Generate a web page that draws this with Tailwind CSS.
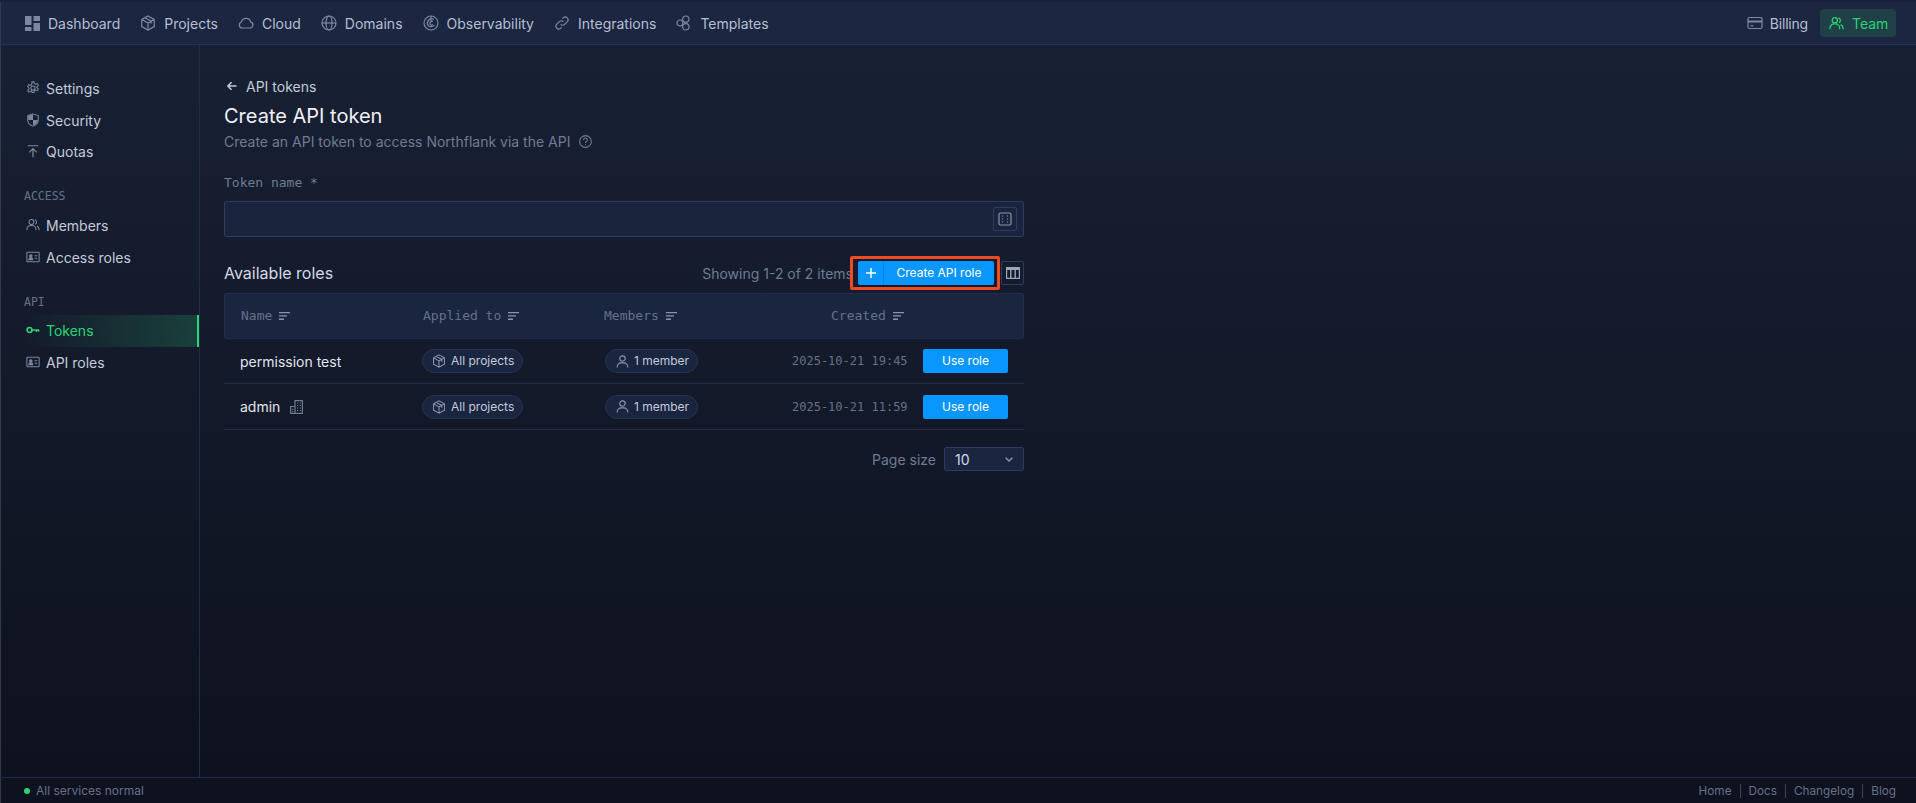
<!DOCTYPE html>
<html lang="en">
<head>
    <meta charset="UTF-8">
    <meta name="viewport" content="width=device-width, initial-scale=1.0">
    <script src="https://cdn.jsdelivr.net/npm/@tailwindcss/browser@4"></script>
    <title>Create API token</title>
</head>
<body class="h-[803px] overflow-hidden bg-[#0e121e] font-['Inter',sans-serif] text-[14px] text-[#c3cbdb]">

    <!-- icon sprite -->
    <svg class="hidden">
        <symbol id="i-dash" viewBox="0 0 15 15"><path fill="currentColor" stroke="none" d="M0 0h6.500v9H0zM8.500 0H15v5H8.500zM8.500 7H15v8H8.500zM0 11h6.500v4H0z"/></symbol>
        <symbol id="i-box" viewBox="0 0 16 16"><path d="M8 1l6.200 3.400v7.200L8 15l-6.200-3.400V4.400zM1.800 4.400L8 8l6.200-3.600M8 8v7M4.900 2.700l6.200 3.500v2.600"/></symbol>
        <symbol id="i-cloud" viewBox="0 0 16 16"><path d="M4.200 13h7.900a3 3 0 0 0 .6-5.900 4.800 4.800 0 0 0-9.300-.1A3.100 3.100 0 0 0 4.200 13z"/></symbol>
        <symbol id="i-globe" viewBox="0 0 16 16"><circle cx="8" cy="8" r="7"/><ellipse cx="8" cy="8" rx="3" ry="7"/><path d="M1 8h14"/></symbol>
        <symbol id="i-obs" viewBox="0 0 16 16"><circle cx="8" cy="8" r="7"/><path d="M10.800 4.200A4.400 4.400 0 0 0 5.200 10.600 4.200 4.200 0 0 0 11.400 10M10 6.200A2.600 2.600 0 0 0 7 9.600 2 2 0 0 0 9.800 9.400M8 1v6"/></symbol>
        <symbol id="i-link" viewBox="0 0 16 16"><path d="M6.600 9.400a2.800 2.800 0 0 0 4 0l2.600-2.600a2.800 2.800 0 0 0-4-4l-.9.900M9.400 6.600a2.800 2.800 0 0 0-4 0l-2.600 2.600a2.800 2.800 0 0 0 4 4l.9-.9"/></symbol>
        <symbol id="i-tpl" viewBox="0 0 16 16"><circle cx="9.800" cy="4.200" r="3.200"/><circle cx="9.800" cy="11.800" r="3.200"/><circle cx="4" cy="8" r="3"/></symbol>
        <symbol id="i-card" viewBox="0 0 16 16"><rect x="1" y="2.500" width="14" height="11" rx="1.500"/><path d="M1 6.500h14" stroke-width="2"/><path d="M3.500 10.800h3"/></symbol>
        <symbol id="i-users" viewBox="0 0 16 16"><circle cx="6.200" cy="4.600" r="2.800"/><path d="M1 14v-1a4.500 4.500 0 0 1 4.500-4.500h1.400A4.500 4.500 0 0 1 11.400 13v1M10 2a2.800 2.800 0 0 1 .6 5.200M12.400 9.200A4.400 4.400 0 0 1 15 13v1"/></symbol>
        <symbol id="i-gear" viewBox="0 0 16 16"><circle cx="8" cy="8" r="2.400"/><path d="M6.800 1h2.400l.4 2 1.400.7 1.900-.8 1.200 2-1.500 1.400v1.400l1.500 1.400-1.200 2-1.900-.8-1.400.7-.4 2.200H6.800l-.4-2.200L5 11.900l-1.900.8-1.200-2 1.500-1.400V7.900L1.900 6.300l1.200-2 1.900.8 1.400-.8z"/></symbol>
        <symbol id="i-shield" viewBox="0 0 16 16"><path d="M8 1l6 2v5c0 3.400-2.500 5.800-6 7-3.500-1.200-6-3.600-6-7V3z"/><path fill="currentColor" stroke="none" d="M8 1.500V8H2.500V3.300zM8 8h5.500c-.2 3-2.400 5.300-5.500 6.400z"/></symbol>
        <symbol id="i-up" viewBox="0 0 16 16"><path d="M2 2h12M8 15V5.500M3.800 9.500L8 5.300l4.200 4.200"/></symbol>
        <symbol id="i-id" viewBox="0 0 16 16"><rect x="1" y="2.500" width="14" height="11" rx="1"/><circle cx="5.500" cy="6.800" r="1.400" fill="currentColor"/><path d="M3.200 11c0-1.300 1-2 2.300-2s2.300.7 2.300 2z" fill="currentColor"/><path d="M9.800 6.500h3M9.800 9.500h3"/></symbol>
        <symbol id="i-key" viewBox="0 0 16 16"><circle cx="4" cy="8" r="2.800" stroke-width="1.800"/><path d="M6.800 8h8.200M12 8v2.300M14.500 8v1.800" stroke-width="1.800"/></symbol>
        <symbol id="i-sort" viewBox="0 0 11 8"><path fill="currentColor" stroke="none" d="M0 0h11v1.300H0zM0 3.300h8v1.300H0zM0 6.600h5v1.300H0z"/></symbol>
        <symbol id="i-user" viewBox="0 0 14 14"><circle cx="7" cy="3.800" r="2.900"/><path d="M1.300 13.500v-.8A4.200 4.200 0 0 1 5.500 8.500h3a4.200 4.200 0 0 1 4.200 4.200v.8"/></symbol>
    </svg>

    <!-- top nav -->
    <header class="h-[45px] flex items-center justify-between bg-[#1c2640] border-t-2 border-b border-t-[#18213a] border-b-[#25325a] pl-[25px] pr-[20px] shadow-[inset_1px_0_0_#333a4a]">
        <nav class="flex items-center gap-[20px] text-[#b4bfd3]">
            <a class="flex items-center gap-[8px]"><svg class="w-[15px] h-[15px] text-[#7c88a1]"><use href="#i-dash"/></svg>Dashboard</a>
            <a class="flex items-center gap-[8px]"><svg class="w-[16px] h-[16px] text-[#7c88a1] fill-none stroke-current stroke-[1.200]"><use href="#i-box"/></svg>Projects</a>
            <a class="flex items-center gap-[8px]"><svg class="w-[16px] h-[16px] text-[#7c88a1] fill-none stroke-current stroke-[1.200]"><use href="#i-cloud"/></svg>Cloud</a>
            <a class="flex items-center gap-[8px]"><svg class="w-[16px] h-[16px] text-[#7c88a1] fill-none stroke-current stroke-[1.200]"><use href="#i-globe"/></svg>Domains</a>
            <a class="flex items-center gap-[8px]"><svg class="w-[16px] h-[16px] text-[#7c88a1] fill-none stroke-current stroke-[1.200]"><use href="#i-obs"/></svg>Observability</a>
            <a class="flex items-center gap-[8px]"><svg class="w-[16px] h-[16px] text-[#7c88a1] fill-none stroke-current stroke-[1.200]"><use href="#i-link"/></svg>Integrations</a>
            <a class="flex items-center gap-[8px]"><svg class="w-[16px] h-[16px] text-[#7c88a1] fill-none stroke-current stroke-[1.200]"><use href="#i-tpl"/></svg>Templates</a>
        </nav>
        <div class="flex items-center gap-[12px] text-[#b4bfd3]">
            <a class="flex items-center gap-[7px]"><svg class="w-[16px] h-[16px] text-[#7c88a1] fill-none stroke-current stroke-[1.200]"><use href="#i-card"/></svg><span class="tracking-[-0.2px]">Billing</span></a>
            <a class="flex items-center gap-[8px] h-[28px] w-[76px] pl-[9px] rounded-[4px] bg-[#1f4046] text-[#2bd576]"><svg class="w-[15px] h-[15px] fill-none stroke-current stroke-[1.300]"><use href="#i-users"/></svg>Team</a>
        </div>
    </header>

    <div class="h-[732px] flex bg-linear-to-b from-[#182034] to-[#0e121e] shadow-[inset_1px_0_0_#333a4a]">
        <!-- sidebar -->
        <aside class="w-[200px] shrink-0 border-r border-[#212c49] pl-[24px] pt-[27px]">
            <a class="h-[32px] flex items-center gap-[6px] pl-[2px]"><svg class="w-[14px] h-[14px] text-[#7c88a1] fill-none stroke-current stroke-[1.200]"><use href="#i-gear"/></svg>Settings</a>
            <a class="h-[32px] flex items-center gap-[6px] pl-[2px]"><svg class="w-[14px] h-[14px] text-[#7c88a1] fill-none stroke-current stroke-[1.200]"><use href="#i-shield"/></svg>Security</a>
            <a class="h-[32px] flex items-center gap-[6px] pl-[2px] pb-[2px]"><svg class="w-[14px] h-[14px] text-[#7c88a1] fill-none stroke-current stroke-[1.400]"><use href="#i-up"/></svg>Quotas</a>
            <div class="mt-[20px] mb-[6px] h-[16px] leading-[16px] font-['DejaVu_Sans_Mono',monospace] text-[11.500px] text-[#667189]">ACCESS</div>
            <a class="h-[32px] flex items-center gap-[6px] pl-[2px] pb-[2px]"><svg class="w-[14px] h-[14px] text-[#7c88a1] fill-none stroke-current stroke-[1.200]"><use href="#i-users"/></svg>Members</a>
            <a class="h-[32px] flex items-center gap-[6px] pl-[2px] pb-[2px]"><svg class="w-[14px] h-[14px] text-[#7c88a1] fill-none stroke-current stroke-[1.200]"><use href="#i-id"/></svg>Access roles</a>
            <div class="mt-[20px] mb-[5px] h-[16px] leading-[16px] font-['DejaVu_Sans_Mono',monospace] text-[11.500px] text-[#667189]">API</div>
            <a class="h-[32px] flex items-center gap-[6px] pl-[2px] pb-[2px] border-r-2 border-[#2bd576] bg-linear-to-r from-[#2bd576]/0 to-[#2bd576]/20 text-[#2bd576]"><svg class="w-[14px] h-[14px] fill-none stroke-current"><use href="#i-key"/></svg>Tokens</a>
            <a class="h-[32px] flex items-center gap-[6px] pl-[2px] pb-[2px]"><svg class="w-[14px] h-[14px] text-[#7c88a1] fill-none stroke-current stroke-[1.200]"><use href="#i-id"/></svg>API roles</a>
        </aside>

        <!-- main -->
        <main class="w-[800px] ml-[24px] pt-[31px]">
            <a class="h-[20px] flex items-center gap-[9px] pl-[3px] text-[#c3cbdb]">
                <svg class="w-[10px] h-[10px] fill-none stroke-current stroke-[1.500]" viewBox="0 0 10 10"><path d="M9.500 5H1M4.500 1.200L.8 5l3.700 3.800"/></svg>API tokens
            </a>
            <h1 class="mt-[6px] h-[28px] leading-[28px] text-[20px] font-normal text-[#eef1f6]">Create API token</h1>
            <p class="mt-[1px] h-[20px] flex items-center gap-[9px] text-[#6f7b94]">
                Create an API token to access Northflank via the API
                <svg class="w-[13px] h-[13px] fill-none stroke-current stroke-[1.200]" viewBox="0 0 14 14"><circle cx="7" cy="7" r="6.300"/><path d="M5 5.300a2 2 0 1 1 3 1.700c-.7.400-1 .8-1 1.500M7 10v.8"/></svg>
            </p>

            <label class="block mt-[24px] h-[16px] leading-[16px] font-['DejaVu_Sans_Mono',monospace] text-[13px] text-[#6f7b94]">Token name *</label>
            <div class="mt-[10px] h-[36px] flex items-center justify-end pr-[6px] bg-[#1a243c] border border-[#2c3c62] rounded-[2px]">
                <button class="w-[24px] h-[24px] flex items-center justify-center border border-[#2c3c62] rounded-[2px] text-[#8a95ac]">
                    <svg class="w-[14px] h-[14px] fill-none stroke-current stroke-[1.200]" viewBox="0 0 14 14"><rect x="1" y="1" width="12" height="12" rx="1.500"/><path d="M4.500 3.500v1M4.500 6.500v1M4.500 9.500v1M9.500 3.500v1M9.500 6.500v1M9.500 9.500v1"/></svg>
                </button>
            </div>

            <!-- roles table -->
            <div class="mt-[24px] h-[24px] flex items-center justify-between">
                <h2 class="text-[16px] font-normal text-[#d3d9e4]">Available roles</h2>
                <div class="flex items-center">
                    <span class="text-[#6f7b94]">Showing 1-2 of 2 items</span>
                    <div class="relative ml-[5px]">
                        <button class="w-[136px] h-[24px] flex items-center rounded-[2px] bg-[#0a96ff] text-white text-[12px]">
                            <span class="w-[26px] h-full flex items-center justify-center border-r border-[#0a84e0]">
                                <svg class="w-[10px] h-[10px] stroke-white fill-none stroke-[1.500]" viewBox="0 0 10 10"><path d="M5 0v10M0 5h10"/></svg>
                            </span>
                            <span class="flex-1 text-center">Create API role</span>
                        </button>
                        <div class="absolute -top-[5px] -bottom-[5px] -left-[8px] -right-[6px] border-[3px] border-[#f04a23] rounded-[2px]"></div>
                    </div>
                    <button class="ml-[7px] w-[23px] h-[24px] flex items-center justify-center border border-[#2c3c62] rounded-[2px] text-[#9aa5ba]">
                        <svg class="w-[14px] h-[12px] fill-current" viewBox="0 0 14 12"><path fill-rule="evenodd" d="M0 0h14v12H0zM1.200 3v7.800h2.900V3zM5.500 3v7.800h3V3zM9.900 3v7.800h2.900V3z"/></svg>
                    </button>
                </div>
            </div>

            <div class="mt-[8px]">
                <div class="h-[46px] grid grid-cols-[198px_181px_187px_1fr] items-center bg-[#1a2540] border border-[#212d4e] rounded-[2px] font-['DejaVu_Sans_Mono',monospace] text-[13px] text-[#667189]">
                    <span class="flex items-center gap-[7px] pl-[16px]">Name<svg class="w-[11px] h-[8px] text-[#8a95ac]"><use href="#i-sort"/></svg></span>
                    <span class="flex items-center gap-[7px]">Applied to<svg class="w-[11px] h-[8px] text-[#8a95ac]"><use href="#i-sort"/></svg></span>
                    <span class="flex items-center gap-[7px]">Members<svg class="w-[11px] h-[8px] text-[#8a95ac]"><use href="#i-sort"/></svg></span>
                    <span class="flex items-center gap-[7px] pl-[40px]">Created<svg class="w-[11px] h-[8px] text-[#8a95ac]"><use href="#i-sort"/></svg></span>
                </div>

                <div class="h-[45px] grid grid-cols-[199px_182px_187px_1fr] items-center border-b border-[#212d4e]">
                    <span class="pl-[16px] text-[#e0e5ed]">permission test</span>
                    <span class="w-[101px] h-[24px] -ml-[1px] flex items-center gap-[5px] pl-[9px] rounded-full bg-[#1a2540] border border-[#253251] text-[12px]"><svg class="w-[14px] h-[14px] text-[#8a95ac] fill-none stroke-current stroke-[1.200]"><use href="#i-box"/></svg>All projects</span>
                    <span class="w-[93px] h-[24px] flex items-center gap-[5px] pl-[10px] rounded-full bg-[#1a2540] border border-[#253251] text-[12px]"><svg class="w-[13px] h-[13px] text-[#8a95ac] fill-none stroke-current stroke-[1.200]"><use href="#i-user"/></svg>1 member</span>
                    <span class="flex items-center justify-between pr-[16px] font-['DejaVu_Sans_Mono',monospace] text-[12px] text-[#667189]">2025-10-21 19:45
                        <button class="w-[85px] h-[24px] rounded-[2px] bg-[#0a96ff] text-white text-[12px] font-['Inter',sans-serif]">Use role</button>
                    </span>
                </div>
                <div class="h-[46px] grid grid-cols-[199px_182px_187px_1fr] items-center border-b border-[#212d4e]">
                    <span class="flex items-center gap-[10px] pl-[16px] text-[#e0e5ed]">admin
                        <svg class="w-[13px] h-[14px] text-[#6f7b94] fill-none stroke-current stroke-[1.200]" viewBox="0 0 13 14"><path d="M.6 13.400V6.500h4.400V.6h7.400v12.800zM5 13.400V6.500"/><path d="M2.200 9.500h1.200M2.200 11.500h1.200M7 3h1.200M9.800 3H11M7 5.500h1.200M9.800 5.500H11M7 8h1.200M9.800 8H11M7 10.500h1.200M9.800 10.500H11"/></svg>
                    </span>
                    <span class="w-[101px] h-[24px] -ml-[1px] flex items-center gap-[5px] pl-[9px] rounded-full bg-[#1a2540] border border-[#253251] text-[12px]"><svg class="w-[14px] h-[14px] text-[#8a95ac] fill-none stroke-current stroke-[1.200]"><use href="#i-box"/></svg>All projects</span>
                    <span class="w-[93px] h-[24px] flex items-center gap-[5px] pl-[10px] rounded-full bg-[#1a2540] border border-[#253251] text-[12px]"><svg class="w-[13px] h-[13px] text-[#8a95ac] fill-none stroke-current stroke-[1.200]"><use href="#i-user"/></svg>1 member</span>
                    <span class="flex items-center justify-between pr-[16px] font-['DejaVu_Sans_Mono',monospace] text-[12px] text-[#667189]">2025-10-21 11:59
                        <button class="w-[85px] h-[24px] rounded-[2px] bg-[#0a96ff] text-white text-[12px] font-['Inter',sans-serif]">Use role</button>
                    </span>
                </div>
            </div>

            <div class="mt-[17px] flex items-center justify-end gap-[8px]">
                <span class="text-[#6f7b94]">Page size</span>
                <div class="w-[80px] h-[24px] flex items-center justify-between px-[10px] bg-[#1a2540] border border-[#2c3c62] rounded-[2px] text-[#d3d9e4] text-[14px]">
                    10
                    <svg class="w-[8px] h-[5px] fill-none stroke-[#8a95ac] stroke-[1.500]" viewBox="0 0 8 5"><path d="M.7.700L4 4l3.300-3.300"/></svg>
                </div>
            </div>
        </main>
    </div>

    <!-- footer -->
    <footer class="h-[26px] flex items-center justify-between bg-[#0e121e] border-t border-[#212d4f] pl-[24px] pr-[20px] text-[12px] text-[#667189] shadow-[inset_1px_0_0_#333a4a]">
        <div class="flex items-center gap-[6px]">
            <span class="w-[6px] h-[6px] rounded-full bg-[#2bd576]"></span>
            All services normal
        </div>
        <div class="flex items-center text-[11.750px]">
            <a class="pr-[8px] border-r border-[#3a4560] leading-[14px]">Home</a>
            <a class="px-[8px] border-r border-[#3a4560] leading-[14px]">Docs</a>
            <a class="px-[8px] border-r border-[#3a4560] leading-[14px]">Changelog</a>
            <a class="pl-[8px] leading-[14px]">Blog</a>
        </div>
    </footer>
</body>
</html>
